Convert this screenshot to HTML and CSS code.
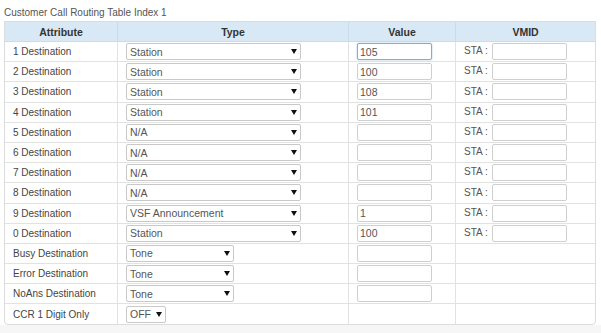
FILE: index.html
```html
<!DOCTYPE html>
<html lang="en">
<head>
    <meta charset="UTF-8">
    <title>Customer Call Routing Table</title>
    <link rel="stylesheet" href="styles.css">
</head>
<body>
    <div class="page">
        <div class="caption">Customer Call Routing Table Index 1</div>
        <div class="table-box">
            <table class="ccr-table">
                <thead>
                    <tr>
                        <th class="col-attr">Attribute</th>
                        <th class="col-type">Type</th>
                        <th class="col-value">Value</th>
                        <th class="col-vmid">VMID</th>
                    </tr>
                </thead>
                <tbody>
                    <tr>
                        <td>1 Destination</td>
                        <td><select class="sel sel-wide"><option>Station</option></select></td>
                        <td><input type="text" class="inp inp-focus" value="105"></td>
                        <td><span class="sta">STA :</span><input type="text" class="inp"></td>
                    </tr>
                    <tr>
                        <td>2 Destination</td>
                        <td><select class="sel sel-wide"><option>Station</option></select></td>
                        <td><input type="text" class="inp" value="100"></td>
                        <td><span class="sta">STA :</span><input type="text" class="inp"></td>
                    </tr>
                    <tr>
                        <td>3 Destination</td>
                        <td><select class="sel sel-wide"><option>Station</option></select></td>
                        <td><input type="text" class="inp" value="108"></td>
                        <td><span class="sta">STA :</span><input type="text" class="inp"></td>
                    </tr>
                    <tr>
                        <td>4 Destination</td>
                        <td><select class="sel sel-wide"><option>Station</option></select></td>
                        <td><input type="text" class="inp" value="101"></td>
                        <td><span class="sta">STA :</span><input type="text" class="inp"></td>
                    </tr>
                    <tr>
                        <td>5 Destination</td>
                        <td><select class="sel sel-wide"><option>N/A</option></select></td>
                        <td><input type="text" class="inp"></td>
                        <td><span class="sta">STA :</span><input type="text" class="inp"></td>
                    </tr>
                    <tr>
                        <td>6 Destination</td>
                        <td><select class="sel sel-wide"><option>N/A</option></select></td>
                        <td><input type="text" class="inp"></td>
                        <td><span class="sta">STA :</span><input type="text" class="inp"></td>
                    </tr>
                    <tr>
                        <td>7 Destination</td>
                        <td><select class="sel sel-wide"><option>N/A</option></select></td>
                        <td><input type="text" class="inp"></td>
                        <td><span class="sta">STA :</span><input type="text" class="inp"></td>
                    </tr>
                    <tr>
                        <td>8 Destination</td>
                        <td><select class="sel sel-wide"><option>N/A</option></select></td>
                        <td><input type="text" class="inp"></td>
                        <td><span class="sta">STA :</span><input type="text" class="inp"></td>
                    </tr>
                    <tr>
                        <td>9 Destination</td>
                        <td><select class="sel sel-wide"><option>VSF Announcement</option></select></td>
                        <td><input type="text" class="inp" value="1"></td>
                        <td><span class="sta">STA :</span><input type="text" class="inp"></td>
                    </tr>
                    <tr>
                        <td>0 Destination</td>
                        <td><select class="sel sel-wide"><option>Station</option></select></td>
                        <td><input type="text" class="inp" value="100"></td>
                        <td><span class="sta">STA :</span><input type="text" class="inp"></td>
                    </tr>
                    <tr>
                        <td>Busy Destination</td>
                        <td><select class="sel sel-mid"><option>Tone</option></select></td>
                        <td><input type="text" class="inp"></td>
                        <td></td>
                    </tr>
                    <tr>
                        <td>Error Destination</td>
                        <td><select class="sel sel-mid"><option>Tone</option></select></td>
                        <td><input type="text" class="inp"></td>
                        <td></td>
                    </tr>
                    <tr>
                        <td>NoAns Destination</td>
                        <td><select class="sel sel-mid"><option>Tone</option></select></td>
                        <td><input type="text" class="inp"></td>
                        <td></td>
                    </tr>
                    <tr>
                        <td>CCR 1 Digit Only</td>
                        <td><select class="sel sel-small"><option>OFF</option></select></td>
                        <td></td>
                        <td></td>
                    </tr>
                </tbody>
            </table>
        </div>
    </div>
</body>
</html>
```

FILE: styles.css
```css
body {
    margin: 0;
    background: #f6f6f6;
    font-family: "Liberation Sans", Arial, sans-serif;
    font-size: 10px;
    color: #444;
}

.page {
    background: white;
    padding: 6px 5px 0 4px;
}

.caption {
    height: 15px;
    line-height: 13px;
    color: #555;
    font-size: 10px;
}

.table-box {
    border: 1px solid #dcdcdc;
    border-radius: 0 0 4px 4px;
    overflow: hidden;
}

.ccr-table {
    width: 100%;
    border-collapse: collapse;
    table-layout: fixed;
}

.ccr-table th {
    background: #d8e9f5;
    color: #333;
    font-weight: bold;
    font-size: 10.5px;
    height: 19px;
    padding: 0;
    text-align: center;
    border-left: 1px solid #c9dcea;
    border-bottom: 1px solid #c9dcea;
}

.ccr-table th:first-child,
.ccr-table td:first-child {
    border-left: none;
}

.col-attr { width: 112px; }
.col-type { width: 230px; }
.col-value { width: 106px; }

.ccr-table td {
    height: 19.2px;
    padding: 0 0 0 8px;
    border-left: 1px solid #e2e2e2;
    border-top: 1px solid #e2e2e2;
    white-space: nowrap;
}

.ccr-table tbody tr:first-child td {
    border-top: none;
}

.sel {
    appearance: none;
    -webkit-appearance: none;
    height: 17px;
    padding: 0 0 0 3px;
    border: 1px solid #c8c8c8;
    border-radius: 2px;
    background: white url("data:image/svg+xml,%3Csvg xmlns='http://www.w3.org/2000/svg' width='6' height='5'%3E%3Cpath d='M0 0h6L3 5z' fill='%23111'/%3E%3C/svg%3E") no-repeat;
    font-family: inherit;
    font-size: 10.5px;
    color: #555;
    vertical-align: middle;
}

.sel-wide {
    width: 175px;
    background-position: 164px 5px;
}

.sel-mid {
    width: 108px;
    background-position: 97px 5px;
}

.sel-small {
    width: 40px;
    background-position: 29px 5px;
}

.inp {
    width: 75px;
    height: 17px;
    box-sizing: border-box;
    padding: 0 2px;
    border: 1px solid #cfcfcf;
    border-radius: 2px;
    font-family: inherit;
    font-size: 10.5px;
    color: #555;
    vertical-align: middle;
}

.inp-focus {
    border-color: #7aaedb;
    box-shadow: 0 0 2px #9cc4e6;
}

.sta {
    display: inline-block;
    width: 28px;
    color: #555;
}
```
